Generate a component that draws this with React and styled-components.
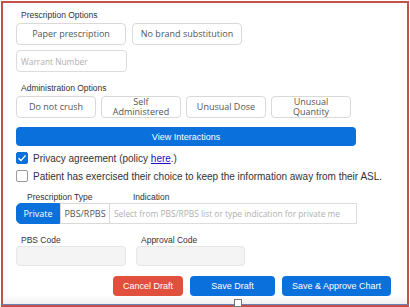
import React from "react";
import styled, { createGlobalStyle } from "styled-components";

const GlobalStyle = createGlobalStyle`
  body {
    margin: 0;
    background: #ffffff;
    font-family: "Liberation Sans", Arial, sans-serif;
  }
`;

const Frame = styled.div`
  position: relative;
  width: 410px;
  height: 307px;
  overflow: hidden;
  background: #ffffff;
`;

const Panel = styled.div`
  margin: 1px 1px 0 1px;
  height: 303px;
  box-sizing: border-box;
  border: 2px solid #c4504a;
  border-bottom: none;
  padding: 7px 0 0 13px;
  display: flex;
  flex-direction: column;
  background: linear-gradient(#ffffff 292px, #f1f1f1 300px);
`;

const BottomRule = styled.div`
  height: 1px;
  margin: 0 1px;
  background: #6b84b8;
`;

const BottomRed = styled.div`
  height: 2px;
  margin: 0 1px;
  background: #c4504a;
`;

const Handle = styled.div`
  position: absolute;
  left: 234px;
  top: 299px;
  width: 6px;
  height: 6px;
  background: #ffffff;
  border: 1px solid #777;
`;

const Label = styled.div`
  box-sizing: border-box;
  width: ${p => (p.$w ? `${p.$w}px` : "auto")};
  font-size: 8.5px;
  color: #333;
  margin: ${p => p.$m || "0"};
  padding-left: ${p => p.$indent ?? 5}px;
  line-height: 10px;
`;

const Row = styled.div`
  display: flex;
  gap: ${p => p.$gap ?? 5}px;
  margin: ${p => p.$m || "0"};
`;

const OptionButton = styled.div`
  width: ${p => p.$w}px;
  height: 22px;
  box-sizing: border-box;
  border: 1px solid #d9d9d9;
  border-radius: 4px;
  display: flex;
  align-items: center;
  justify-content: center;
  text-align: center;
  font-family: "Open Sans", "Noto Sans", sans-serif;
  font-size: 9px;
  line-height: ${p => (p.$two ? "10px" : "12px")};
  color: #555;
  overflow: hidden;
`;

const Field = styled.div`
  width: ${p => p.$w}px;
  height: ${p => p.$h || 22}px;
  box-sizing: border-box;
  border: 1px solid ${p => (p.$filled ? "#e6e6e6" : "#dcdcdc")};
  border-left-width: ${p => (p.$joined ? 0 : 1)}px;
  border-radius: ${p => (p.$joined ? "0" : "4px")};
  background: ${p => (p.$filled ? "#f4f4f4" : "#ffffff")};
  display: flex;
  align-items: center;
  padding-left: 4px;
  font-family: "Open Sans", "Noto Sans", sans-serif;
  font-size: 8.4px;
  color: #b0b0b0;
  white-space: nowrap;
  overflow: hidden;
`;

const WideBlue = styled.div`
  width: 340px;
  height: 19px;
  margin-top: 9px;
  border-radius: 4px;
  background: #0a70dc;
  color: #ffffff;
  font-size: 9px;
  display: flex;
  align-items: center;
  justify-content: center;
`;

const CheckRow = styled.div`
  display: flex;
  align-items: center;
  gap: 5px;
  margin: ${p => p.$m || "0"};
  font-size: 10px;
  color: #333;
`;

const Box = styled.div`
  width: 12px;
  height: 12px;
  box-sizing: border-box;
  border-radius: 2px;
  border: 1px solid ${p => (p.$on ? "#0a70dc" : "#9a9a9a")};
  background: ${p => (p.$on ? "#0a70dc" : "#ffffff")};
  display: flex;
  align-items: center;
  justify-content: center;
`;

const Link = styled.span`
  color: #1a0dcc;
  text-decoration: underline;
`;

const Segment = styled.div`
  width: ${p => p.$w}px;
  height: 21px;
  box-sizing: border-box;
  display: flex;
  align-items: center;
  justify-content: center;
  font-family: "Open Sans", "Noto Sans", sans-serif;
  font-size: 9px;
  white-space: nowrap;
  color: ${p => (p.$active ? "#ffffff" : "#555")};
  background: ${p => (p.$active ? "#0a70dc" : "#ffffff")};
  border: 1px solid ${p => (p.$active ? "#0a70dc" : "#d9d9d9")};
  border-radius: ${p => (p.$active ? "5px 0 0 5px" : "0")};
`;

const ActionButton = styled.div`
  width: ${p => p.$w}px;
  height: 20px;
  border-radius: 4px;
  background: ${p => (p.$danger ? "#e0503d" : "#0a70dc")};
  color: #ffffff;
  font-size: 9px;
  display: flex;
  align-items: center;
  justify-content: center;
`;

const Check = () => (
  <svg width="10" height="10" viewBox="0 0 10 10">
    <path d="M1.5 5.2 L4 7.6 L8.6 2.4" fill="none" stroke="#fff" strokeWidth="1.4" />
  </svg>
);

export default function App() {
  return (
    <Frame>
      <GlobalStyle />
      <Panel>
        <Label>Prescription Options</Label>
        <Row $m="3px 0 0 0" $gap={6}>
          <OptionButton $w={110}>Paper prescription</OptionButton>
          <OptionButton $w={110}>No brand substitution</OptionButton>
        </Row>
        <Row $m="5px 0 0 0">
          <Field $w={111}>Warrant Number</Field>
        </Row>
        <Label $m="11px 0 0 0">Administration Options</Label>
        <Row $m="3px 0 0 0" $gap={5}>
          <OptionButton $w={80}>Do not crush</OptionButton>
          <OptionButton $w={80} $two>Self<br />Administered</OptionButton>
          <OptionButton $w={80}>Unusual Dose</OptionButton>
          <OptionButton $w={80} $two>Unusual<br />Quantity</OptionButton>
        </Row>
        <WideBlue>View Interactions</WideBlue>
        <CheckRow $m="6px 0 0 0">
          <Box $on><Check /></Box>
          <span>Privacy agreement (policy <Link>here</Link>.)</span>
        </CheckRow>
        <CheckRow $m="6px 0 0 0">
          <Box />
          <span>Patient has exercised their choice to keep the information away from their ASL.</span>
        </CheckRow>
        <Row $m="10px 0 0 0" $gap={0}>
          <Label $indent={11} $w={117}>Prescription Type</Label>
          <Label $indent={0}>Indication</Label>
        </Row>
        <Row $m="1px 0 0 0" $gap={0}>
          <Segment $active $w={44}>Private</Segment>
          <Segment $w={50}>PBS/RPBS</Segment>
          <Field $w={247} $h={21} $joined>
            Select from PBS/RPBS list or type indication for private me
          </Field>
        </Row>
        <Row $m="11px 0 0 0" $gap={0}>
          <Label $w={120}>PBS Code</Label>
          <Label>Approval Code</Label>
        </Row>
        <Row $m="1px 0 0 0" $gap={10}>
          <Field $w={110} $h={20} $filled />
          <Field $w={109} $h={20} $filled />
        </Row>
        <Row $m="10px 0 0 97px" $gap={7}>
          <ActionButton $w={70} $danger>Cancel Draft</ActionButton>
          <ActionButton $w={85}>Save Draft</ActionButton>
          <ActionButton $w={109}>Save &amp; Approve Chart</ActionButton>
        </Row>
      </Panel>
      <BottomRule />
      <BottomRed />
      <Handle />
    </Frame>
  );
}
